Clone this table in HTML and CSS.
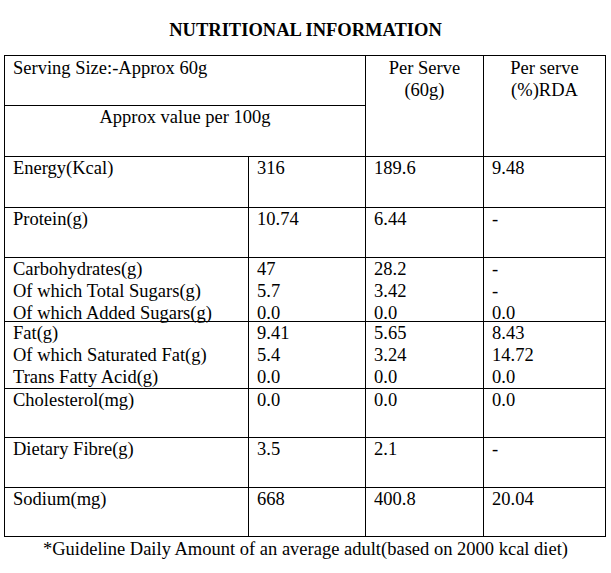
FILE: index.html
```html
<!DOCTYPE html>
<html lang="en">
<head>
<meta charset="utf-8">
<title>Nutritional Information</title>
<link rel="stylesheet" href="styles.css">
</head>
<body>
<h1 class="title">NUTRITIONAL INFORMATION</h1>
<div class="facts">
  <div class="cell span2 serving">Serving Size:-Approx 60g</div>
  <div class="cell tall center"><div>Per Serve</div><div>(60g)</div></div>
  <div class="cell tall center"><div>Per serve</div><div>(%)RDA</div></div>
  <div class="cell span2 center approx">Approx value per 100g</div>

  <div class="cell">Energy(Kcal)</div>
  <div class="cell">316</div>
  <div class="cell">189.6</div>
  <div class="cell">9.48</div>

  <div class="cell">Protein(g)</div>
  <div class="cell">10.74</div>
  <div class="cell">6.44</div>
  <div class="cell">-</div>

  <div class="cell"><div>Carbohydrates(g)</div><div>Of which Total Sugars(g)</div><div>Of which Added Sugars(g)</div></div>
  <div class="cell"><div>47</div><div>5.7</div><div>0.0</div></div>
  <div class="cell"><div>28.2</div><div>3.42</div><div>0.0</div></div>
  <div class="cell"><div>-</div><div>-</div><div>0.0</div></div>

  <div class="cell"><div>Fat(g)</div><div>Of which Saturated Fat(g)</div><div>Trans Fatty Acid(g)</div></div>
  <div class="cell"><div>9.41</div><div>5.4</div><div>0.0</div></div>
  <div class="cell"><div>5.65</div><div>3.24</div><div>0.0</div></div>
  <div class="cell"><div>8.43</div><div>14.72</div><div>0.0</div></div>

  <div class="cell">Cholesterol(mg)</div>
  <div class="cell">0.0</div>
  <div class="cell">0.0</div>
  <div class="cell">0.0</div>

  <div class="cell">Dietary Fibre(g)</div>
  <div class="cell">3.5</div>
  <div class="cell">2.1</div>
  <div class="cell">-</div>

  <div class="cell">Sodium(mg)</div>
  <div class="cell">668</div>
  <div class="cell">400.8</div>
  <div class="cell">20.04</div>
</div>
<p class="note">*Guideline Daily Amount of an average adult(based on 2000 kcal diet)</p>
</body>
</html>
```

FILE: styles.css
```css
html, body {
  margin: 0;
  padding: 0;
  background: #ffffff;
}

body {
  font-family: "Liberation Serif", "Times New Roman", serif;
  font-size: 18.5px;
  line-height: 22px;
  color: #000000;
  width: 611px;
}

.title {
  margin: 0 0 14px 0;
  padding-top: 19px;
  font-size: 18.5px;
  line-height: 22px;
  font-weight: bold;
  text-align: center;
}

.facts {
  display: grid;
  grid-template-columns: 244px 117px 118px 122px;
  grid-template-rows: 50px 51px 51px 50px 64px 67px 49px 50px 49px;
  margin-left: 4px;
  width: 602px;
  box-sizing: border-box;
  border-top: 1px solid #000;
  border-left: 1px solid #000;
}

.cell {
  box-sizing: border-box;
  border-right: 1px solid #000;
  border-bottom: 1px solid #000;
  padding: 0 4px 0 8px;
  white-space: nowrap;
  overflow: visible;
  min-height: 0;
}

.span2 {
  grid-column: span 2;
}

.serving {
  padding-top: 1px;
}

.approx {
  padding-top: 0;
}

.tall {
  grid-row: span 2;
  padding-top: 1px;
}

.center {
  text-align: center;
  padding-left: 0;
  padding-right: 0;
}

.note {
  margin: 1px 0 0 0;
  width: 611px;
  text-align: center;
  line-height: 22px;
}
```
